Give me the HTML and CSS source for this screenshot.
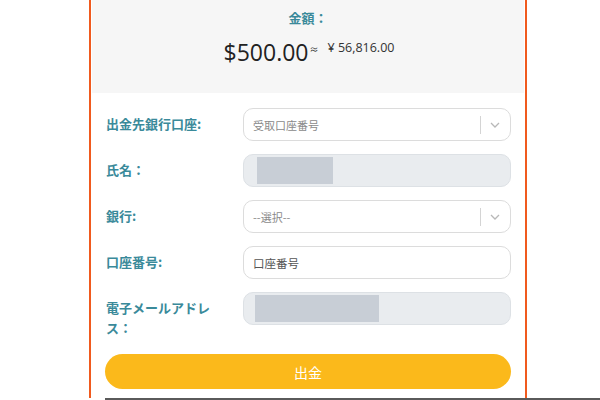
FILE: index.html
```html
<!DOCTYPE html>
<html lang="ja">
<head>
<meta charset="utf-8">
<link rel="stylesheet" href="styles.css">
</head>
<body>
<div class="page">
  <div class="panel">
    <div class="amount-box">
      <div class="amount-label">金額：</div>
      <div class="amount-row">
        <span class="usd">$500.00</span><span class="approx">≈</span><span class="jpy">¥ 56,816.00</span>
      </div>
    </div>
    <form class="form">
      <div class="row">
        <label class="label">出金先銀行口座:</label>
        <div class="field select">
          <span class="placeholder">受取口座番号</span>
          <span class="sep"></span>
          <svg class="chev" width="10" height="6" viewBox="0 0 10 6"><path d="M1 1l4 4 4-4" fill="none" stroke="#b8b8b8" stroke-width="1.3"/></svg>
        </div>
      </div>
      <div class="row">
        <label class="label">氏名：</label>
        <div class="field disabled">
          <span class="mask mask-name"></span>
        </div>
      </div>
      <div class="row">
        <label class="label">銀行:</label>
        <div class="field select">
          <span class="placeholder">--選択--</span>
          <span class="sep"></span>
          <svg class="chev" width="10" height="6" viewBox="0 0 10 6"><path d="M1 1l4 4 4-4" fill="none" stroke="#b8b8b8" stroke-width="1.3"/></svg>
        </div>
      </div>
      <div class="row">
        <label class="label">口座番号:</label>
        <div class="field">
          <span class="text">口座番号</span>
        </div>
      </div>
      <div class="row">
        <label class="label wrap">電子メールアドレス：</label>
        <div class="field disabled">
          <span class="mask mask-mail"></span>
        </div>
      </div>
      <button type="button" class="submit">出金</button>
    </form>
  </div>
  <div class="bottom-bar"></div>
</div>
</body>
</html>
```

FILE: styles.css
```css
* { box-sizing: border-box; }
html, body {
  margin: 0;
  padding: 0;
  background: #ffffff;
  font-family: "Noto Sans", "Noto Sans CJK JP", sans-serif;
}
.page {
  width: 600px;
  height: 400px;
  overflow: hidden;
  position: relative;
}
.panel {
  margin-left: 89px;
  width: 438px;
  height: 398px;
  border-left: 2px solid #f05a1e;
  border-right: 2px solid #f05a1e;
  background: #ffffff;
}
.amount-box {
  height: 93px;
  margin: 0 1px;
  background: #f6f6f6;
  display: flex;
  flex-direction: column;
  align-items: center;
  padding-top: 8px;
}
.amount-label {
  font-family: "Noto Sans CJK JP", sans-serif;
  font-weight: 700;
  font-size: 13px;
  color: #3a8a9a;
  line-height: 20px;
}
.amount-row {
  display: flex;
  align-items: flex-start;
  margin-top: 6px;
  margin-left: 2px;
}
.usd {
  font-family: "Open Sans", sans-serif;
  font-size: 23px;
  line-height: 36px;
  color: #222222;
}
.approx {
  font-size: 9px;
  color: #333;
  line-height: 12px;
  margin-top: 10px;
  margin-left: 1px;
}
.jpy {
  font-family: "Open Sans", sans-serif;
  font-size: 12.5px;
  color: #333333;
  line-height: 16px;
  margin-top: 6px;
  margin-left: 9px;
}
.form {
  padding: 15px 14px 0 14px;
  display: flex;
  flex-direction: column;
}
.row {
  display: flex;
  align-items: flex-start;
  height: 46px;
}
.label {
  width: 138px;
  padding-left: 1px;
  font-family: "Noto Sans CJK JP", sans-serif;
  font-weight: 700;
  font-size: 13px;
  color: #3a8a9a;
  line-height: 20px;
  padding-top: 6px;
}
.label.wrap {
  width: 118px;
  margin-right: 20px;
}
.field {
  width: 268px;
  height: 33px;
  border: 1px solid #dcdcdc;
  border-radius: 10px;
  background: #ffffff;
  display: flex;
  align-items: center;
  padding-left: 9px;
  position: relative;
}
.field.disabled {
  background: #e9ecef;
  border-color: #dde1e5;
}
.placeholder {
  font-family: "Noto Sans CJK JP", sans-serif;
  font-size: 11px;
  color: #8a8a8a;
  flex: 1;
}
.text {
  font-family: "Noto Sans CJK JP", sans-serif;
  font-size: 11.5px;
  color: #555555;
}
.sep {
  width: 1px;
  height: 18px;
  background: #d4d4d4;
  margin-right: 9px;
}
.chev {
  margin-right: 10px;
}
.mask {
  position: absolute;
  background: #c8ced6;
  top: 2px;
  bottom: 2px;
}
.mask-name {
  left: 13px;
  width: 76px;
}
.mask-mail {
  left: 11px;
  width: 124px;
}
.submit {
  margin-top: 16px;
  width: 406px;
  height: 35px;
  border: none;
  border-radius: 18px;
  background: #fbb91b;
  color: #ffffff;
  font-family: "Noto Sans CJK JP", sans-serif;
  font-size: 14px;
  padding: 0;
}
.bottom-bar {
  height: 2px;
  margin-left: 105px;
  background: #5a5a5a;
}
```
